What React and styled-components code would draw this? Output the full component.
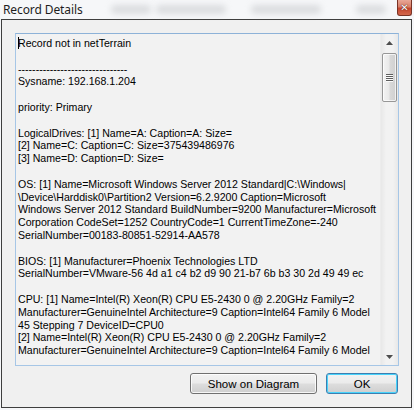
import React from 'react';
import styled, { createGlobalStyle } from 'styled-components';

const GlobalStyle = createGlobalStyle`
  html, body {
    margin: 0;
    padding: 0;
    background: #f4f5f7;
  }
`;

const lines = [
  'Record not in netTerrain',
  '',
  '-------------------------------',
  'Sysname: 192.168.1.204',
  '',
  'priority: Primary',
  '',
  'LogicalDrives: [1] Name=A: Caption=A: Size=',
  '[2] Name=C: Caption=C: Size=375439486976',
  '[3] Name=D: Caption=D: Size=',
  '',
  'OS: [1] Name=Microsoft Windows Server 2012 Standard|C:\\Windows|',
  '\\Device\\Harddisk0\\Partition2 Version=6.2.9200 Caption=Microsoft',
  'Windows Server 2012 Standard BuildNumber=9200 Manufacturer=Microsoft',
  'Corporation CodeSet=1252 CountryCode=1 CurrentTimeZone=-240',
  'SerialNumber=00183-80851-52914-AA578',
  '',
  'BIOS: [1] Manufacturer=Phoenix Technologies LTD',
  'SerialNumber=VMware-56 4d a1 c4 b2 d9 90 21-b7 6b b3 30 2d 49 49 ec',
  '',
  'CPU: [1] Name=Intel(R) Xeon(R) CPU E5-2430 0 @ 2.20GHz Family=2',
  'Manufacturer=GenuineIntel Architecture=9 Caption=Intel64 Family 6 Model',
  '45 Stepping 7 DeviceID=CPU0',
  '[2] Name=Intel(R) Xeon(R) CPU E5-2430 0 @ 2.20GHz Family=2',
  'Manufacturer=GenuineIntel Architecture=9 Caption=Intel64 Family 6 Model',
];

const Window = styled.div`
  width: 414px;
  height: 410px;
  display: flex;
  flex-direction: column;
  box-sizing: border-box;
  padding: 0 2px 2px 1px;
  background: #f6f7f9;
  overflow: hidden;
`;

const TitleBar = styled.div`
  position: relative;
  height: 19px;
  display: flex;
  align-items: center;
  padding-left: 2px;
  flex-shrink: 0;
`;

const Blur = styled.span`
  position: absolute;
  top: 5px;
  height: 9px;
  border-radius: 4px;
  background: #c9cbce;
  filter: blur(3px);
  opacity: 0.6;
`;

const Title = styled.span`
  position: relative;
  font-family: 'Noto Sans', 'DejaVu Sans', sans-serif;
  font-size: 12px;
  color: #1e1e1e;
  letter-spacing: -0.1px;
  margin-top: -1px;
`;

const CloseButton = styled.div`
  position: absolute;
  right: 0;
  top: 0;
  width: 15px;
  height: 16px;
  box-sizing: border-box;
  border: 1px solid #7a3326;
  border-top: none;
  border-radius: 0 0 3px 3px;
  background: linear-gradient(#e9a797 0%, #d8806a 45%, #c5462f 55%, #d2674c 100%);
  display: flex;
  align-items: center;
  justify-content: center;
  color: #fff;
  font-family: 'DejaVu Sans', sans-serif;
  font-weight: bold;
  font-size: 10px;
  text-shadow: 0 0 1px #5a1e14, 0 0 1px #5a1e14;
`;

const Client = styled.div`
  flex: 1;
  display: flex;
  flex-direction: column;
  gap: 7px;
  padding: 13px 12px 13px 13px;
  border: 1px solid #3e3e3e;
  background: #f0f0f0;
`;

const TextBox = styled.div`
  flex: 1;
  display: flex;
  min-height: 0;
  border: 1px solid #a6c6e6;
  border-top-color: #8db2d8;
  background: #f2f2f2;
`;

const TextArea = styled.div`
  flex: 1;
  overflow: hidden;
  padding: 3px 0 0 2px;
  font-family: 'Liberation Sans', Arial, sans-serif;
  font-size: 10.6px;
  line-height: 12.8px;
  color: #000;
`;

const Line = styled.div`
  white-space: pre;
  height: 12.8px;
`;

const Caret = styled.span`
  display: inline-block;
  width: 1px;
  height: 12px;
  margin-right: -1px;
  vertical-align: -2px;
  background: #000;
`;

const ScrollBar = styled.div`
  width: 17px;
  display: flex;
  flex-direction: column;
  background: linear-gradient(90deg, #e8e8e8, #f2f2f2 30%, #f2f2f2 70%, #e8e8e8);
  border-left: 1px solid #ececec;
`;

const Arrow = styled.div`
  height: 17px;
  display: flex;
  align-items: center;
  justify-content: center;
  svg {
    display: block;
  }
`;

const Track = styled.div`
  flex: 1;
  padding: 2px 1px 0 1px;
`;

const Thumb = styled.div`
  position: relative;
  height: 49px;
  box-sizing: border-box;
  border: 1px solid #979797;
  border-radius: 2px;
  background: linear-gradient(90deg, #f3f3f3 0%, #e9e9e9 45%, #d8d8d8 55%, #d0d0d0 100%);
  box-shadow: inset 0 0 0 1px rgba(255, 255, 255, 0.7);
  display: flex;
  flex-direction: column;
  align-items: center;
  justify-content: center;
  gap: 1px;
`;

const Grip = styled.span`
  width: 7px;
  height: 1px;
  background: #5e5e5e;
  box-shadow: 0 1px 0 #fafafa;
`;

const Buttons = styled.div`
  display: flex;
  justify-content: flex-end;
  gap: 9px;
  padding-right: 1px;
`;

const Button = styled.button`
  width: ${p => p.$width}px;
  height: 21px;
  padding: 0;
  box-sizing: border-box;
  border: 1px solid ${p => (p.$default ? '#3c7fb1' : '#707070')};
  border-radius: 3px;
  background: linear-gradient(#f2f2f2 0%, #ebebeb 48%, #dddddd 52%, #cfcfcf 100%);
  box-shadow: inset 0 0 0 1px ${p => (p.$default ? '#48d3fb' : 'rgba(255,255,255,0.8)')};
  font-family: 'Liberation Sans', Arial, sans-serif;
  font-size: 11.5px;
  color: #000;
`;

const UpIcon = () => (
  <svg width="7" height="4" viewBox="0 0 7 4">
    <path d="M3.5 0 L7 4 L0 4 Z" fill="#4d4d4d" />
  </svg>
);

const DownIcon = () => (
  <svg width="7" height="4" viewBox="0 0 7 4">
    <path d="M0 0 L7 0 L3.5 4 Z" fill="#4d4d4d" />
  </svg>
);

const App = () => (
  <>
    <GlobalStyle />
    <Window>
      <TitleBar>
        <Blur style={{ left: 110, width: 40 }} />
        <Blur style={{ left: 155, width: 70 }} />
        <Blur style={{ left: 250, width: 70 }} />
        <Blur style={{ left: 355, width: 30 }} />
        <Title>Record Details</Title>
        <CloseButton>✕</CloseButton>
      </TitleBar>
      <Client>
        <TextBox>
          <TextArea>
            {lines.map((text, i) => (
              <Line key={i}>
                {i === 0 && <Caret />}
                {text}
              </Line>
            ))}
          </TextArea>
          <ScrollBar>
            <Arrow>
              <UpIcon />
            </Arrow>
            <Track>
              <Thumb>
                <Grip />
                <Grip />
                <Grip />
                <Grip />
              </Thumb>
            </Track>
            <Arrow>
              <DownIcon />
            </Arrow>
          </ScrollBar>
        </TextBox>
        <Buttons>
          <Button $width={127}>Show on Diagram</Button>
          <Button $width={72} $default>
            OK
          </Button>
        </Buttons>
      </Client>
    </Window>
  </>
);

export default App;
